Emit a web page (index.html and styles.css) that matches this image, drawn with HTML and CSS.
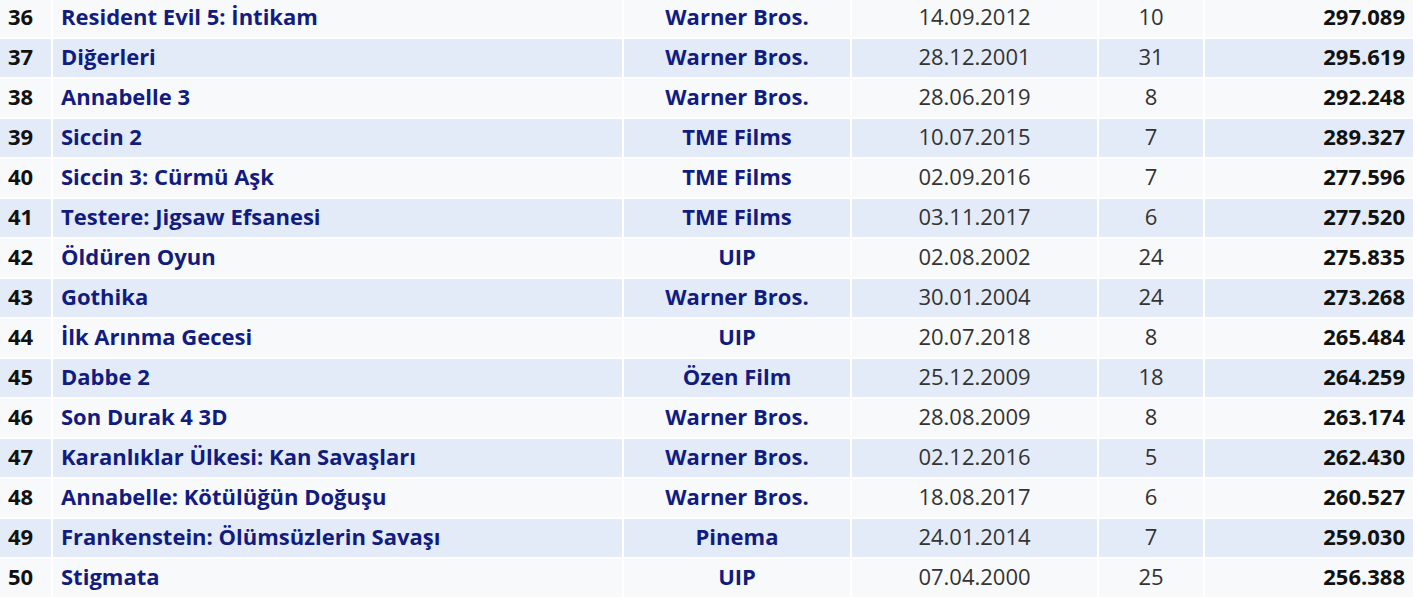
FILE: index.html
```html
<!DOCTYPE html>
<html lang="tr">
<head>
<meta charset="utf-8">
<title>Gişe listesi</title>
<link rel="stylesheet" href="styles.css">
</head>
<body>
<table class="box">
<colgroup>
<col class="c-rank"><col class="c-title"><col class="c-dist"><col class="c-date"><col class="c-weeks"><col class="c-adm">
</colgroup>
<tbody>
<tr><td class="rank">36</td><td class="title">Resident Evil 5: İntikam</td><td class="dist">Warner Bros.</td><td class="date">14.09.2012</td><td class="weeks">10</td><td class="adm">297.089</td></tr>
<tr><td class="rank">37</td><td class="title">Diğerleri</td><td class="dist">Warner Bros.</td><td class="date">28.12.2001</td><td class="weeks">31</td><td class="adm">295.619</td></tr>
<tr><td class="rank">38</td><td class="title">Annabelle 3</td><td class="dist">Warner Bros.</td><td class="date">28.06.2019</td><td class="weeks">8</td><td class="adm">292.248</td></tr>
<tr><td class="rank">39</td><td class="title">Siccin 2</td><td class="dist">TME Films</td><td class="date">10.07.2015</td><td class="weeks">7</td><td class="adm">289.327</td></tr>
<tr><td class="rank">40</td><td class="title">Siccin 3: Cürmü Aşk</td><td class="dist">TME Films</td><td class="date">02.09.2016</td><td class="weeks">7</td><td class="adm">277.596</td></tr>
<tr><td class="rank">41</td><td class="title">Testere: Jigsaw Efsanesi</td><td class="dist">TME Films</td><td class="date">03.11.2017</td><td class="weeks">6</td><td class="adm">277.520</td></tr>
<tr><td class="rank">42</td><td class="title">Öldüren Oyun</td><td class="dist">UIP</td><td class="date">02.08.2002</td><td class="weeks">24</td><td class="adm">275.835</td></tr>
<tr><td class="rank">43</td><td class="title">Gothika</td><td class="dist">Warner Bros.</td><td class="date">30.01.2004</td><td class="weeks">24</td><td class="adm">273.268</td></tr>
<tr><td class="rank">44</td><td class="title">İlk Arınma Gecesi</td><td class="dist">UIP</td><td class="date">20.07.2018</td><td class="weeks">8</td><td class="adm">265.484</td></tr>
<tr><td class="rank">45</td><td class="title">Dabbe 2</td><td class="dist">Özen Film</td><td class="date">25.12.2009</td><td class="weeks">18</td><td class="adm">264.259</td></tr>
<tr><td class="rank">46</td><td class="title">Son Durak 4 3D</td><td class="dist">Warner Bros.</td><td class="date">28.08.2009</td><td class="weeks">8</td><td class="adm">263.174</td></tr>
<tr><td class="rank">47</td><td class="title">Karanlıklar Ülkesi: Kan Savaşları</td><td class="dist">Warner Bros.</td><td class="date">02.12.2016</td><td class="weeks">5</td><td class="adm">262.430</td></tr>
<tr><td class="rank">48</td><td class="title">Annabelle: Kötülüğün Doğuşu</td><td class="dist">Warner Bros.</td><td class="date">18.08.2017</td><td class="weeks">6</td><td class="adm">260.527</td></tr>
<tr><td class="rank">49</td><td class="title">Frankenstein: Ölümsüzlerin Savaşı</td><td class="dist">Pinema</td><td class="date">24.01.2014</td><td class="weeks">7</td><td class="adm">259.030</td></tr>
<tr><td class="rank">50</td><td class="title">Stigmata</td><td class="dist">UIP</td><td class="date">07.04.2000</td><td class="weeks">25</td><td class="adm">256.388</td></tr>
</tbody>
</table>
</body>
</html>
```
FILE: styles.css
```css
html, body {
  margin: 0;
  padding: 0;
  background: #ffffff;
}
body {
  font-family: "Open Sans", "Noto Sans", "DejaVu Sans", sans-serif;
  font-size: 22px;
  overflow: hidden;
}
.box {
  border-collapse: separate;
  border-spacing: 2px;
  table-layout: fixed;
  width: 1417px;
  margin: -3px 0 0 -2px;
}
.c-rank { width: 51px; }
.c-title { width: 569px; }
.c-dist { width: 226px; }
.c-date { width: 245px; }
.c-weeks { width: 104px; }
.c-adm { width: 208px; }
.box td {
  height: 38px;
  padding: 0 8px 3px;
  box-sizing: border-box;
  white-space: nowrap;
  overflow: hidden;
  background: #f8f9fa;
  line-height: 35px;
}
.box tr:nth-child(even) td {
  background: #e2ebf7;
}
.rank {
  font-weight: 700;
  color: #111111;
  text-align: left;
}
.title {
  font-weight: 700;
  color: #121c80;
  text-align: left;
}
.dist {
  font-weight: 700;
  color: #121c80;
  text-align: center;
}
.date, .weeks {
  color: #333333;
  text-align: center;
}
.adm {
  font-weight: 700;
  color: #111111;
  text-align: right;
}
```
